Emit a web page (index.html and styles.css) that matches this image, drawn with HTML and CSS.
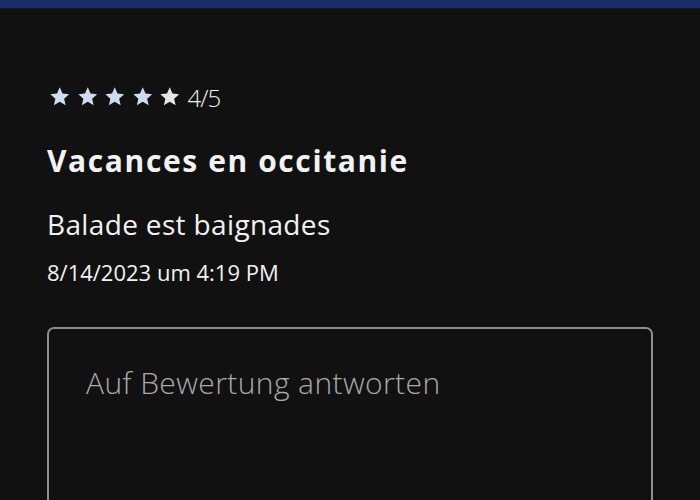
FILE: index.html
```html
<!DOCTYPE html>
<html>
<head>
    <title>Bewertung</title>
    <link rel="stylesheet" href="styles.css">
</head>
<body>
    <div class="topbar"></div>
    <div class="review">
        <div class="rating">
            <span class="stars">
                <svg class="star" viewBox="0 0 24 24"><path d="M12 1.5l3.1 6.9 7.4.7-5.6 5 1.7 7.4L12 17.6l-6.6 3.9 1.7-7.4-5.6-5 7.4-.7z"/></svg>
                <svg class="star" viewBox="0 0 24 24"><path d="M12 1.5l3.1 6.9 7.4.7-5.6 5 1.7 7.4L12 17.6l-6.6 3.9 1.7-7.4-5.6-5 7.4-.7z"/></svg>
                <svg class="star" viewBox="0 0 24 24"><path d="M12 1.5l3.1 6.9 7.4.7-5.6 5 1.7 7.4L12 17.6l-6.6 3.9 1.7-7.4-5.6-5 7.4-.7z"/></svg>
                <svg class="star" viewBox="0 0 24 24"><path d="M12 1.5l3.1 6.9 7.4.7-5.6 5 1.7 7.4L12 17.6l-6.6 3.9 1.7-7.4-5.6-5 7.4-.7z"/></svg>
                <svg class="star empty" viewBox="0 0 24 24"><path d="M12 1.5l3.1 6.9 7.4.7-5.6 5 1.7 7.4L12 17.6l-6.6 3.9 1.7-7.4-5.6-5 7.4-.7z"/></svg>
            </span>
            <span class="score">4/5</span>
        </div>
        <h1 class="title">Vacances en occitanie</h1>
        <p class="text">Balade est baignades</p>
        <p class="date">8/14/2023 um 4:19 PM</p>
        <div class="reply">
            <textarea placeholder="Auf Bewertung antworten"></textarea>
        </div>
    </div>
</body>
</html>
```

FILE: styles.css
```css
body {
    margin: 0;
    background-color: #111111;
    color: #f2f2f2;
    font-family: "Open Sans", Lato, sans-serif;
    height: 500px;
    overflow: hidden;
}
.topbar {
    height: 8px;
    background-color: #182c6a;
    border-bottom: 1px solid #0f1a3c;
}
.review {
    padding: 73px 47px 0 47px;
}
.rating {
    display: flex;
    align-items: center;
    height: 30px;
}
.stars {
    display: flex;
    gap: 6px;
    margin-left: 2px;
}
.star {
    width: 21.5px;
    height: 21.5px;
    fill: #cfdbee;
}
.star.empty {
    fill: #e4e6ea;
}
.score {
    font-size: 24px;
    font-weight: 300;
    margin-left: 7px;
    letter-spacing: -1px;
}
.title {
    font-size: 30px;
    font-weight: bold;
    letter-spacing: 1.6px;
    margin: 31px 0 0 0;
    line-height: 36px;
}
.text {
    font-size: 28px;
    letter-spacing: 0.35px;
    margin: 28px 0 0 0;
    line-height: 34px;
}
.date {
    font-size: 22px;
    margin: 18px 0 0 0;
    line-height: 26px;
}
.reply {
    margin-top: 42px;
    width: 606px;
}
textarea {
    display: block;
    width: 100%;
    height: 240px;
    box-sizing: border-box;
    background: #111111;
    border: 2px solid #8e8e8e;
    border-radius: 7px;
    padding: 33px 37px;
    font-family: "Open Sans", Lato, sans-serif;
    font-size: 30px;
    font-weight: 300;
    letter-spacing: 0.4px;
    color: #eee;
    resize: none;
}
textarea::placeholder {
    color: #a9a9a9;
}
```
